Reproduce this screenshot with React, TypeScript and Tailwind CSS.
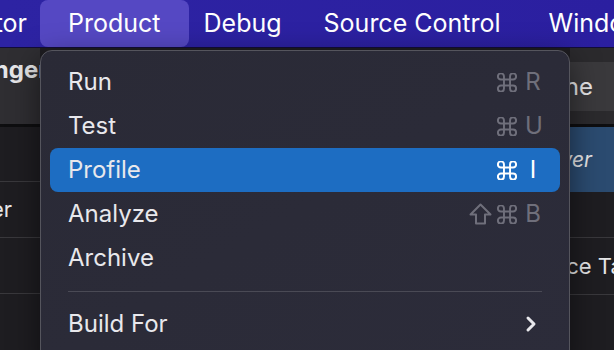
import React from 'react';
import { ChevronRight } from 'lucide-react';

const font = { fontFamily: 'Inter, "Noto Sans", sans-serif' };

type Item = { label: string; keys?: string; shift?: boolean; active?: boolean };

const items: Item[] = [
  { label: 'Run', keys: 'R' },
  { label: 'Test', keys: 'U' },
  { label: 'Profile', keys: 'I', active: true },
  { label: 'Analyze', keys: 'B', shift: true },
  { label: 'Archive' },
];

// ⌘ glyph
function CmdIcon() {
  return (
    <svg width="20" height="19" viewBox="2.6 2.6 18.8 18.8" fill="none" stroke="currentColor" strokeWidth="1.9">
      <path d="M15 6v12a3 3 0 1 0 3-3H6a3 3 0 1 0 3 3V6a3 3 0 1 0-3 3h12a3 3 0 1 0-3-3" />
    </svg>
  );
}

// ⇧ glyph
function ShiftIcon() {
  return (
    <svg width="23" height="22" viewBox="0 0 23 22" fill="none" stroke="currentColor" strokeWidth="2" strokeLinejoin="round">
      <path d="M11.5 1.5 L21.5 11.5 H16 V20.5 H7 V11.5 H1.5 Z" />
    </svg>
  );
}

function MenuRow({ item }: { item: Item }) {
  const dim = item.active ? 'text-white' : 'text-[#6f6f7b]';
  return (
    <div
      className={`flex h-[44px] items-center rounded-[8px] pl-[18px] pr-[19px] ${
        item.active ? 'bg-[#1d6dc2]' : ''
      }`}
    >
      <span className="flex-1 text-[24px] text-[#e8e8ec]">{item.label}</span>
      {item.keys && (
        <div className={`flex items-center ${dim}`}>
          {item.shift && (
            <span className="mr-[5px]">
              <ShiftIcon />
            </span>
          )}
          <CmdIcon />
          <span className="ml-[8px] w-[16px] text-center text-[24px] leading-none">{item.keys}</span>
        </div>
      )}
    </div>
  );
}

function MenuBar() {
  return (
    <div className="flex h-[48px] shrink-0 items-stretch border-b border-[#120d3a] bg-gradient-to-r from-[#2d23a3] to-[#2b1fa0] text-[25px] text-white whitespace-nowrap">
      <div className="flex w-[27px] shrink-0 items-center justify-end overflow-hidden">
        <span>Editor</span>
      </div>
      <div className="ml-[13px] flex shrink-0 items-center rounded-[8px] bg-[#5548c3] px-[28px]">Product</div>
      <div className="flex shrink-0 items-center pl-[15px] pr-[21px]">Debug</div>
      <div className="flex shrink-0 items-center pl-[21px] pr-[24px]">Source Control</div>
      <div className="flex shrink-0 items-center px-[24px]">Window</div>
    </div>
  );
}

function Background() {
  return (
    <div className="flex flex-1 text-[#e6e6e8]">
      <div className="flex w-[40px] flex-col overflow-hidden">
        <div className="flex h-[76px] justify-end overflow-hidden bg-[#2f2e32] pt-[8px] text-[24px] font-bold leading-[28px] whitespace-nowrap">
          <span className="-mr-[8px]">Messenger</span>
        </div>
        <div className="h-[3px] bg-[#0e0e10]" />
        <div className="h-[55px] border-b border-[#39383c] bg-[#1e1d21]" />
        <div className="flex h-[56px] items-center justify-end overflow-hidden border-b border-[#39383c] bg-[#1e1d21] pr-[28px] text-[22px] whitespace-nowrap">
          <span>Owner</span>
        </div>
        <div className="h-[56px] border-b border-[#39383c] bg-[#1e1d21]" />
        <div className="flex-1 bg-[#1e1d21]" />
      </div>
      <div className="flex-1 bg-[#1e1d21]" />
      <div className="flex w-[44px] flex-col overflow-hidden">
        <div className="h-[14px] bg-[#2b2a2d]" />
        <div className="flex h-[49px] items-center justify-end overflow-hidden bg-[#3a393c] pr-[21px] text-[24px] whitespace-nowrap">
          <span>None</span>
        </div>
        <div className="h-[13px] bg-[#2b2a2d]" />
        <div className="h-[3px] bg-[#0e0e10]" />
        <div className="flex h-[65px] items-center justify-end overflow-hidden bg-[#2b4b70] pr-[22px] text-[21px] italic whitespace-nowrap">
          <span>Server</span>
        </div>
        <div className="h-[46px] border-b border-[#39383c] bg-[#1e1d21]" />
        <div className="flex h-[57px] items-center overflow-hidden border-b border-[#39383c] bg-[#1e1d21] text-[22px] whitespace-nowrap">
          <span className="-ml-[52px]">Source Tag</span>
        </div>
        <div className="flex-1 bg-[#1e1d21]" />
      </div>
    </div>
  );
}

export default function App() {
  return (
    <div className="relative flex h-[350px] w-[614px] flex-col overflow-hidden bg-[#1e1d21]" style={font}>
      <MenuBar />
      <Background />

      {/* Product dropdown */}
      <div className="absolute left-[40px] top-[50px] h-[320px] w-[530px] rounded-[12px] border border-[#55555d] bg-gradient-to-br from-[#2a2a36] to-[#2c2c3a] px-[9px] pt-[9px] shadow-[0_8px_30px_rgba(0,0,0,0.5)]">
        {items.map((it) => (
          <MenuRow key={it.label} item={it} />
        ))}
        <div className="flex h-[22px] items-center px-[18px]">
          <div className="h-px flex-1 bg-[#4a4a55]" />
        </div>
        <div className="flex h-[44px] items-center pl-[18px] pr-[17px]">
          <span className="flex-1 text-[24px] text-[#e8e8ec]">Build For</span>
          <ChevronRight size={24} strokeWidth={3} className="text-[#e8e8ec]" />
        </div>
      </div>
    </div>
  );
}
